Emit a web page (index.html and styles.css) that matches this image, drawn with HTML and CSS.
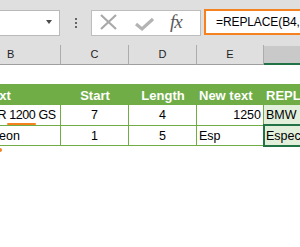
FILE: index.html
```html
<!DOCTYPE html>
<html>
<head>
<meta charset="utf-8">
<link rel="stylesheet" href="styles.css">
</head>
<body>
<div class="sheet">
  <div class="topbar">
    <div class="namebox"><span class="arrow"></span></div>
    <div class="dots"><i></i><i></i><i></i></div>
    <div class="fbtns">
      <svg class="ico-x" width="20" height="16" viewBox="0 0 20 16"><path d="M2 1 L17 15 M17 1 L2 15" stroke="#a9a9a9" stroke-width="2.2" fill="none"/></svg>
      <svg class="ico-check" width="20" height="16" viewBox="0 0 20 16"><path d="M1 8 L7 13 L18 3" stroke="#b3b3b3" stroke-width="3.2" fill="none"/></svg>
      <span class="fx">fx</span>
    </div>
    <div class="finput">=REPLACE(B4,</div>
  </div>
  <div class="colhead">
    <div class="ch">B</div>
    <div class="ch c">C</div>
    <div class="ch c">D</div>
    <div class="ch c">E</div>
    <div class="ch sel"></div>
  </div>
  <div class="blank"></div>
  <div class="row thead">
    <div class="cell"><span class="cut-t">Text</span></div>
    <div class="cell mid">Start</div>
    <div class="cell mid">Length</div>
    <div class="cell">New text</div>
    <div class="cell">REPLACE</div>
  </div>
  <div class="row r1">
    <div class="cell line"><span class="cut-bmw">BMW R <span class="mark">1200</span> GS</span></div>
    <div class="cell line mid">7</div>
    <div class="cell line mid">4</div>
    <div class="cell line right">1250</div>
    <div class="cell res">BMW R 1250 GS</div>
  </div>
  <div class="row r2">
    <div class="cell line"><span class="cut-eon">Chameleon</span></div>
    <div class="cell line mid">1</div>
    <div class="cell line mid">5</div>
    <div class="cell line">Esp</div>
    <div class="cell res active">Especial</div>
  </div>
  <span class="dot"></span>
</div>
</body>
</html>
```
FILE: styles.css
```css
html, body {
  margin: 0;
  padding: 0;
  background: #ffffff;
}
.sheet {
  position: relative;
  width: 300px;
  height: 247px;
  overflow: hidden;
  font-family: "Liberation Sans", Arial, sans-serif;
  background: #ffffff;
}
.topbar {
  height: 45px;
  background: #dfdfdf;
  display: flex;
  align-items: flex-start;
  padding-top: 9px;
  box-sizing: border-box;
}
.namebox {
  width: 60px;
  height: 26px;
  margin-top: 1px;
  background: #fff;
  border: 1px solid #b9b9b9;
  border-left: none;
  box-sizing: border-box;
  display: flex;
  justify-content: flex-end;
  align-items: center;
  padding-right: 7px;
}
.arrow {
  width: 0;
  height: 0;
  border-left: 3.5px solid transparent;
  border-right: 3.5px solid transparent;
  border-top: 4px solid #4a4a4a;
  margin-top: -3px;
}
.dots {
  margin-left: 15px;
  margin-top: 9px;
  display: flex;
  flex-direction: column;
  gap: 2px;
}
.dots i {
  display: block;
  width: 2px;
  height: 2px;
  background: #666;
}
.fbtns {
  margin-left: 14px;
  margin-top: 1px;
  width: 110px;
  height: 26px;
  background: #fff;
  border: 1px solid #bdbdbd;
  box-sizing: border-box;
  display: flex;
  align-items: center;
  position: relative;
}
.ico-x {
  margin-left: 7px;
  margin-top: -2px;
}
.ico-check {
  margin-left: 16px;
  margin-top: 2px;
}
.fx {
  margin-left: 15px;
  font-family: "Liberation Serif", "Times New Roman", serif;
  font-style: italic;
  font-size: 19px;
  color: #5a5a5a;
  letter-spacing: -1px;
  margin-top: -2px;
}
.finput {
  margin-left: 3px;
  flex: 1;
  height: 26px;
  border: 2px solid #f5821f;
  border-right: none;
  background: #fff;
  box-sizing: border-box;
  padding-left: 10px;
  font-size: 12px;
  letter-spacing: -0.1px;
  line-height: 22px;
  color: #000;
  white-space: nowrap;
  overflow: hidden;
}
.colhead {
  display: grid;
  grid-template-columns: 61px 68px 68px 67px 1fr;
  height: 20px;
  background: #dfdfdf;
}
.ch {
  border-right: 1px solid #acacac;
  border-bottom: 1px solid #9e9e9e;
  font-size: 11px;
  color: #1e1e1e;
  line-height: 19px;
  padding-left: 7px;
}
.ch.c {
  padding-left: 0;
  text-align: center;
}
.ch.sel {
  background: #c9c9c9;
  border-right: none;
  border-bottom: 2px solid #217346;
  margin-top: 1px;
}
.blank {
  height: 19px;
}
.row {
  display: grid;
  grid-template-columns: 61px 68px 68px 67px 1fr;
  font-size: 12.5px;
  white-space: nowrap;
}
.thead {
  height: 21px;
  background: #70ad47;
  color: #fff;
  font-weight: bold;
  font-size: 13px;
}
.r1 {
  height: 21px;
}
.r2 {
  height: 20px;
}
.cell {
  display: flex;
  align-items: center;
  padding: 0 2px;
  overflow: hidden;
  box-sizing: border-box;
}
.thead .cell {
  padding-top: 2px;
}
.r1 .cell, .r2 .cell {
  border-bottom: 1px solid #70ad47;
  color: #000;
}
.cell.line {
  border-right: 1px solid #70ad47;
}
.cell.mid {
  justify-content: center;
}
.cell.right {
  justify-content: flex-end;
}
.cell.res {
  background: #e2efda;
  overflow: visible;
  position: relative;
}
.cell.active::after {
  content: "";
  position: absolute;
  left: -1px;
  top: -2px;
  right: -4px;
  bottom: -2px;
  border: 2px solid #217346;
}
.cut-t {
  margin-left: -17px;
}
.cut-bmw {
  margin-left: -37px;
  letter-spacing: -0.4px;
}
.cut-eon {
  margin-left: -46px;
}
.mark {
  position: relative;
}
.mark::after {
  content: "";
  position: absolute;
  left: -2px;
  right: -1px;
  bottom: -3px;
  height: 2px;
  border-radius: 1px;
  background: #f5821f;
}
.dot {
  position: absolute;
  left: -2px;
  top: 148px;
  width: 4px;
  height: 4px;
  border-radius: 50%;
  background: #f5821f;
}
```
